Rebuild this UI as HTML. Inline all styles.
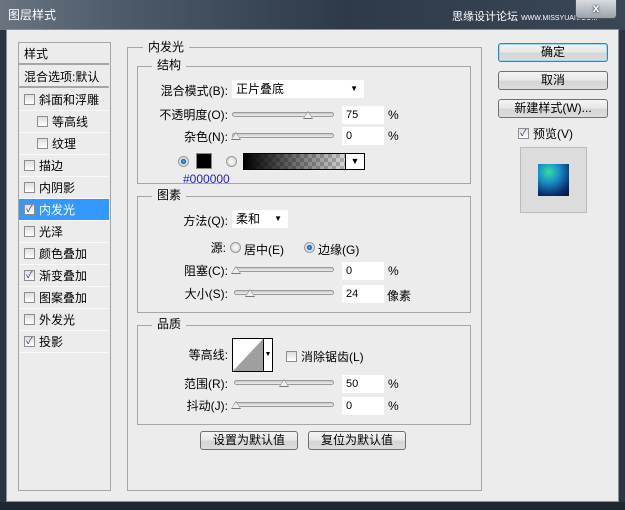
<!DOCTYPE html>
<html><head><meta charset="utf-8"><style>
*{margin:0;padding:0;box-sizing:border-box}
body{width:625px;height:510px;overflow:hidden;background:#2b3440;font-family:"Liberation Sans","Noto Sans CJK SC",sans-serif;font-size:12px;color:#000;position:relative}
.a{position:absolute}
.title{left:0;top:0;width:625px;height:30px;background:linear-gradient(90deg,#6a7480 0%,#4c5a6a 20%,#2e3a48 55%,#3a4756 100%)}
.client{left:6px;top:29px;width:613px;height:473px;background:#ececec;border:1px solid #8a9098}
.box{position:absolute;border:1px solid #a6a6a6}
.lbl{position:absolute;background:#ececec;padding:0 5px;font-size:12px;line-height:14px}
.row{position:absolute;left:19px;width:90px;height:22px;line-height:22px;border-bottom:1px solid #fafafa}
.cb{display:inline-block;width:11px;height:11px;border:1px solid #8d8d8d;background:linear-gradient(#ddd,#fff);vertical-align:middle;margin:-2px 4px 0 0;font-size:10px;line-height:9px;text-align:center;color:#2a3c8a;overflow:hidden}
.btn{position:absolute;border:1px solid #707070;border-radius:3px;background:linear-gradient(#f4f4f4 0%,#e6e6e6 50%,#d4d4d4 52%,#dcdcdc 100%);text-align:center;line-height:16px;font-size:12px}
.inp{position:absolute;background:#fff;height:18px;line-height:18px;padding-left:4px;font-size:11px}
.sl{position:absolute;height:5px;border:1px solid #9a9a9a;border-radius:3px;background:linear-gradient(#c8c8c8,#eee)}
.th{position:absolute;width:0;height:0;border-left:5px solid transparent;border-right:5px solid transparent;border-bottom:8px solid #777}
.th:after{content:"";position:absolute;left:-4px;top:1px;border-left:4px solid transparent;border-right:4px solid transparent;border-bottom:6px solid #eee}
.r{text-align:right;position:absolute;line-height:14px}
.rad{position:absolute;width:11px;height:11px;border-radius:50%;border:1px solid #999;background:radial-gradient(#fff,#ccc)}
.rad.on{background:radial-gradient(circle at 50% 50%,#5ab4ff 0,#1a5fa8 35%,#cfdceb 45%,#eee 100%)}
</style></head><body>
<div class="a title"></div>
<div class="a" style="left:8px;top:6px;color:#fff;font-size:12px">图层样式</div>
<div class="a" style="left:452px;top:8px;color:#fff;font-size:11px">思缘设计论坛 <span style="font-size:7px">WWW.MISSYUAN.COM</span></div>
<div class="a" style="left:575px;top:0;width:42px;height:19px;background:linear-gradient(#d8dce0,#9aa2aa);border:1px solid #4a5058;border-top:none;border-radius:0 0 4px 4px;color:#fff;text-align:center;font-weight:bold;line-height:16px;text-shadow:0 0 2px #000">x</div>
<div class="a client"></div>

<div class="box" style="left:18px;top:42px;width:93px;height:449px;background:#ececec"></div>
<div class="row" style="top:43px;border-bottom:2px solid #a6a6a6;padding-left:5px">样式</div>
<div class="row" style="top:66px;border-bottom:2px solid #a6a6a6;padding-left:5px">混合选项:默认</div>
<div class="row" style="top:89px;padding-left:5px"><span class="cb"></span>斜面和浮雕</div>
<div class="row" style="top:111px;padding-left:18px"><span class="cb"></span>等高线</div>
<div class="row" style="top:133px;padding-left:18px"><span class="cb"></span>纹理</div>
<div class="row" style="top:155px;padding-left:5px"><span class="cb"></span>描边</div>
<div class="row" style="top:177px;padding-left:5px"><span class="cb"></span>内阴影</div>
<div class="row" style="top:199px;padding-left:5px;background:#3399ff;color:#fff"><span class="cb">✓</span>内发光</div>
<div class="row" style="top:221px;padding-left:5px"><span class="cb"></span>光泽</div>
<div class="row" style="top:243px;padding-left:5px"><span class="cb"></span>颜色叠加</div>
<div class="row" style="top:265px;padding-left:5px"><span class="cb">✓</span>渐变叠加</div>
<div class="row" style="top:287px;padding-left:5px"><span class="cb"></span>图案叠加</div>
<div class="row" style="top:309px;padding-left:5px"><span class="cb"></span>外发光</div>
<div class="row" style="top:331px;padding-left:5px"><span class="cb">✓</span>投影</div>

<div class="box" style="left:127px;top:47px;width:355px;height:444px"></div>
<div class="lbl" style="left:143px;top:40px">内发光</div>
<div class="box" style="left:137px;top:66px;width:334px;height:118px"></div>
<div class="lbl" style="left:152px;top:58px">结构</div>
<div class="r" style="left:140px;width:88px;top:84px">混合模式(B):</div>
<div class="inp" style="left:232px;top:80px;width:132px;font-size:12px">正片叠底<span style="position:absolute;right:6px;top:0;font-size:8px">▼</span></div>
<div class="r" style="left:140px;width:88px;top:108px">不透明度(O):</div>
<div class="sl" style="left:232px;top:112px;width:102px"></div><div class="th" style="left:303px;top:111px"></div>
<div class="inp" style="left:342px;top:106px;width:42px">75</div><div class="a" style="left:388px;top:108px">%</div>
<div class="r" style="left:140px;width:88px;top:130px">杂色(N):</div>
<div class="sl" style="left:232px;top:133px;width:102px"></div><div class="th" style="left:231px;top:132px"></div>
<div class="inp" style="left:342px;top:127px;width:42px">0</div><div class="a" style="left:388px;top:129px">%</div>
<div class="rad on" style="left:178px;top:156px"></div>
<div class="a" style="left:196px;top:153px;width:16px;height:16px;background:#000;border:1px solid #888"></div>
<div class="rad" style="left:226px;top:156px"></div>
<div class="a" style="left:243px;top:153px;width:122px;height:17px;border:1px solid #000;background:linear-gradient(90deg,#000,rgba(0,0,0,0)),repeating-conic-gradient(#ccc 0 25%,#fff 0 50%) 0 0/8px 8px"></div>
<div class="a" style="left:345px;top:154px;width:19px;height:15px;background:#fff;border-left:1px solid #000;text-align:center;font-size:9px;line-height:15px">▼</div>
<div class="a" style="left:183px;top:172px;color:#2323c8;font-size:12px">#000000</div>

<div class="box" style="left:137px;top:196px;width:334px;height:117px"></div>
<div class="lbl" style="left:152px;top:188px">图素</div>
<div class="r" style="left:140px;width:88px;top:214px">方法(Q):</div>
<div class="inp" style="left:232px;top:210px;width:56px;font-size:12px">柔和<span style="position:absolute;right:6px;top:0;font-size:8px">▼</span></div>
<div class="r" style="left:140px;width:86px;top:241px">源:</div>
<div class="rad" style="left:230px;top:242px"></div><div class="a" style="left:244px;top:241px">居中(E)</div>
<div class="rad on" style="left:304px;top:242px"></div><div class="a" style="left:318px;top:241px">边缘(G)</div>
<div class="r" style="left:140px;width:88px;top:264px">阻塞(C):</div>
<div class="sl" style="left:234px;top:267px;width:100px"></div><div class="th" style="left:231px;top:266px"></div>
<div class="inp" style="left:342px;top:262px;width:42px">0</div><div class="a" style="left:388px;top:264px">%</div>
<div class="r" style="left:140px;width:88px;top:287px">大小(S):</div>
<div class="sl" style="left:234px;top:290px;width:100px"></div><div class="th" style="left:245px;top:289px"></div>
<div class="inp" style="left:342px;top:285px;width:42px">24</div><div class="a" style="left:387px;top:287px">像素</div>

<div class="box" style="left:137px;top:325px;width:334px;height:100px"></div>
<div class="lbl" style="left:152px;top:317px">品质</div>
<div class="r" style="left:140px;width:88px;top:348px">等高线:</div>
<div class="a" style="left:232px;top:338px;width:41px;height:34px;border:1px solid #000;background:#fff">
<svg width="30" height="32" style="position:absolute;left:0;top:0"><polygon points="0,32 30,0 30,32" fill="#9f9f9f"/></svg>
<div style="position:absolute;left:30px;top:0;width:9px;height:32px;border-left:1px solid #000;font-size:7px;line-height:32px;text-align:center">▼</div></div>
<div class="a" style="left:286px;top:348px"><span class="cb"></span>消除锯齿(L)</div>
<div class="r" style="left:140px;width:88px;top:377px">范围(R):</div>
<div class="sl" style="left:234px;top:380px;width:100px"></div><div class="th" style="left:279px;top:379px"></div>
<div class="inp" style="left:342px;top:375px;width:42px">50</div><div class="a" style="left:388px;top:377px">%</div>
<div class="r" style="left:140px;width:88px;top:399px">抖动(J):</div>
<div class="sl" style="left:234px;top:402px;width:100px"></div><div class="th" style="left:231px;top:401px"></div>
<div class="inp" style="left:342px;top:397px;width:42px">0</div><div class="a" style="left:388px;top:399px">%</div>

<div class="btn" style="left:200px;top:431px;width:98px;height:19px">设置为默认值</div>
<div class="btn" style="left:308px;top:431px;width:98px;height:19px">复位为默认值</div>

<div class="btn" style="left:498px;top:43px;width:110px;height:19px;border-color:#3c7fb1;box-shadow:inset 0 0 0 1px #9fd8f5">确定</div>
<div class="btn" style="left:498px;top:71px;width:110px;height:19px">取消</div>
<div class="btn" style="left:498px;top:99px;width:110px;height:19px">新建样式(W)...</div>
<div class="a" style="left:518px;top:125px"><span class="cb">✓</span>预览(V)</div>
<div class="a" style="left:520px;top:147px;width:67px;height:66px;background:#dcdcdc;border:1px solid #bbb"></div>
<div class="a" style="left:538px;top:164px;width:31px;height:32px;background:radial-gradient(circle at 35% 25%,#2fe0a0 0,#1a8cc8 35%,#0a2a6a 75%,#061430 100%)"></div>
<div class="a" style="left:0;top:502px;width:625px;height:8px;background:#1e2630"></div>
</body></html>
